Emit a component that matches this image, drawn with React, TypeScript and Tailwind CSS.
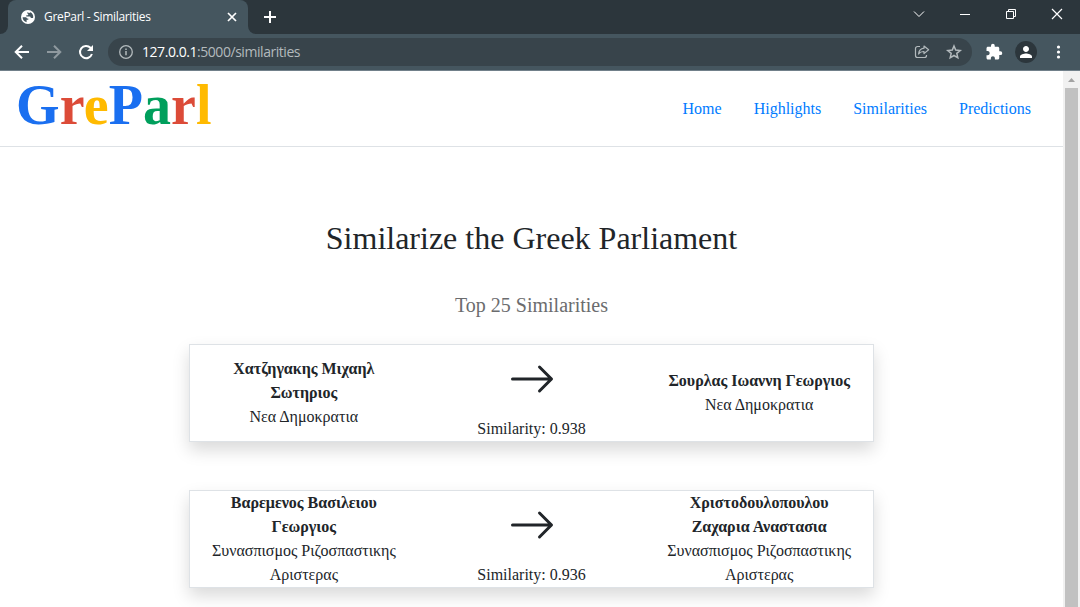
import type { ReactNode } from "react";
import { BsArrowRight } from "react-icons/bs";
import { MdExtension, MdPerson } from "react-icons/md";

type Member = { name: string[]; party: string[] };
type Pair = { from: Member; to: Member; score: string };

const pairs: Pair[] = [
  {
    from: { name: ["Χατζηγακης Μιχαηλ", "Σωτηριος"], party: ["Νεα Δημοκρατια"] },
    to: { name: ["Σουρλας Ιωαννη Γεωργιος"], party: ["Νεα Δημοκρατια"] },
    score: "0.938",
  },
  {
    from: { name: ["Βαρεμενος Βασιλειου", "Γεωργιος"], party: ["Συνασπισμος Ριζοσπαστικης", "Αριστερας"] },
    to: { name: ["Χριστοδουλοπουλου", "Ζαχαρια Αναστασια"], party: ["Συνασπισμος Ριζοσπαστικης", "Αριστερας"] },
    score: "0.936",
  },
];

const logo = [
  ["G", "text-[#1a6ff0]"],
  ["r", "text-[#dc4b38]"],
  ["e", "text-[#ffba00]"],
  ["P", "text-[#1a6ff0]"],
  ["a", "text-[#009f5c]"],
  ["r", "text-[#dc4b38]"],
  ["l", "text-[#ffba00]"],
];

function TabStrip() {
  return (
    <div className="flex h-[34px] shrink-0 items-stretch bg-[#2c363c] text-white">
      <div className="flex w-2 items-end bg-[#45565f]">
        <div className="h-full w-full rounded-br-lg bg-[#2c363c]" />
      </div>
      <div className="flex w-[240px] items-center rounded-t-lg bg-[#45565f] pl-[13px] pr-[10px]">
        <svg className="size-[14px]" viewBox="0 0 14 14" fill="none">
          <circle cx="7" cy="7" r="7" fill="currentColor" />
          <path
            d="M1.6 7.2h2.6c1 0 1.6.5 1.8 1.3h1.3v1.3H5.6v2.4C3.200 11.700 1.600 9.700 1.600 7.200zM6.300 2.200c-.2 1 .2 1.500 1 1.700l-.3 1.300H5.300v1.200h3.200c.9 0 1.300.6 1.300 1.500h2.300c.6-2.600-.7-4.800-3-5.600-.3.8-1 .9-1.400.4z"
            fill="#45565f"
          />
        </svg>
        <span className="ml-[9px] flex-1 whitespace-nowrap text-[12px] tracking-[-0.31px]">GreParl - Similarities</span>
        <svg className="size-3" viewBox="0 0 12 12" stroke="currentColor" strokeWidth="1.7">
          <path d="M2 2l8 8M10 2l-8 8" />
        </svg>
      </div>
      <div className="flex w-2 items-end bg-[#45565f]">
        <div className="h-full w-full rounded-bl-lg bg-[#2c363c]" />
      </div>
      <svg className="ml-[7px] mt-[10px] size-[14px]" viewBox="0 0 14 14" stroke="currentColor" strokeWidth="2">
        <path d="M7 1v12M1 7h12" />
      </svg>
      <div className="ml-auto flex h-7 items-center gap-[34px] pr-[17px]">
        <svg className="size-3" viewBox="0 0 12 12" fill="none" stroke="currentColor">
          <path d="M1 3.500l5 5 5-5" />
        </svg>
        <svg className="size-3" viewBox="0 0 12 12" fill="none" stroke="currentColor">
          <path d="M1 6.500h10" />
        </svg>
        <svg className="size-3" viewBox="0 0 12 12" fill="none" stroke="currentColor">
          <path d="M1.500 3.500h7v7h-7zM3.500 3.500v-2h7v7h-2" />
        </svg>
        <svg className="size-3" viewBox="0 0 12 12" fill="none" stroke="currentColor" strokeWidth="1.2">
          <path d="M1 1l10 10M11 1l-10 10" />
        </svg>
      </div>
    </div>
  );
}

function Toolbar() {
  return (
    <div className="flex h-[37px] shrink-0 items-center border-b border-[#71808a] bg-[#45565f] pl-3 text-white">
      <svg className="size-5" viewBox="0 0 20 20" fill="none" stroke="currentColor" strokeWidth="2">
        <path d="M17 10H4.500M10 3.700L3.700 10l6.300 6.300" />
      </svg>
      <svg className="ml-3 size-5 text-[#8f999f]" viewBox="0 0 20 20" fill="none" stroke="currentColor" strokeWidth="2">
        <path d="M3 10h12.500M10 3.700l6.300 6.300-6.300 6.300" />
      </svg>
      <svg className="ml-3 size-5" viewBox="0 0 20 20" fill="none" stroke="currentColor" strokeWidth="2">
        <path d="M15.900 12a6.100 6.100 0 1 1-1.400-6.200l1.200 1.200" />
        <path d="M17 3v6h-6z" fill="currentColor" stroke="none" />
      </svg>
      <div className="ml-3 flex h-7 w-[864px] items-center rounded-full bg-[#38444b] pl-[11px] pr-[9px] text-[#b3babd]">
        <svg className="size-[14px]" viewBox="0 0 14 14" fill="none" stroke="currentColor" strokeWidth="1.3">
          <circle cx="7" cy="7" r="6.3" />
          <path d="M7 6v4.300M7 3.400v1.500" strokeWidth="1.5" />
        </svg>
        <span className="ml-[9px] flex-1 whitespace-nowrap text-[14px] leading-5 tracking-[-0.45px]">
          <span className="text-white">127.0.0.1</span>:5000/similarities
        </span>
        <svg className="size-4" viewBox="0 0 16 16" fill="none" stroke="currentColor" strokeWidth="1.2">
          <path d="M6 2.500H3.500a2 2 0 0 0-2 2v7a2 2 0 0 0 2 2h7a2 2 0 0 0 2-2V11" />
          <path d="M10 2l4.600 3.800L10 9.600V7.500C7.400 7.400 5.800 8.200 4.600 10c.3-3.400 2-5.400 5.400-5.800z" strokeLinejoin="round" />
        </svg>
        <svg className="ml-[15px] size-[18px]" viewBox="0 0 18 18" fill="none" stroke="currentColor" strokeWidth="1.5">
          <path d="M9 3l1.700 4.100 4.500.4-3.400 2.900 1 4.400L9 12.500l-3.800 2.300 1-4.400-3.400-2.900 4.500-.4z" />
        </svg>
      </div>
      <MdExtension className="ml-[13px] size-[18px]" />
      <div className="ml-3 flex size-[22px] items-center justify-center rounded-full bg-[#2c363c]">
        <MdPerson className="size-[18px]" />
      </div>
      <svg className="ml-[13px] h-4 w-[18px]" viewBox="0 0 18 16" fill="currentColor">
        <circle cx="8.5" cy="3" r="1.6" />
        <circle cx="8.5" cy="8" r="1.6" />
        <circle cx="8.5" cy="13" r="1.6" />
      </svg>
    </div>
  );
}

function Cell({ children }: { children: ReactNode }) {
  return <div className="flex flex-1 basis-0 flex-col items-center justify-center whitespace-nowrap">{children}</div>;
}

function MemberCell({ member }: { member: Member }) {
  return (
    <Cell>
      {member.name.map((line) => (
        <strong key={line} className="font-bold">{line}</strong>
      ))}
      {member.party.map((line) => (
        <span key={line}>{line}</span>
      ))}
    </Cell>
  );
}

function PairCard({ pair }: { pair: Pair }) {
  return (
    <div className="flex h-[98px] border border-[#dee2e6] bg-white text-base leading-6 shadow-[0_8px_16px_rgba(0,0,0,0.15)]">
      <MemberCell member={pair.from} />
      <Cell>
        <BsArrowRight className="mb-[14px] mt-[10px] size-12 shrink-0" />
        <span>Similarity: {pair.score}</span>
      </Cell>
      <MemberCell member={pair.to} />
    </div>
  );
}

export default function App() {
  return (
    <div className="flex h-[607px] w-[1080px] flex-col overflow-hidden bg-white">
      <header className="shrink-0 font-['Open_Sans',sans-serif]">
        <TabStrip />
        <Toolbar />
      </header>
      <div className="flex min-h-0 flex-1 font-['Liberation_Serif',serif]">
        <main className="flex-1 overflow-hidden text-[#212529]">
          <div className="flex h-[76px] items-center justify-between border-b border-[#dee2e6] pl-4 pr-8">
            <div className="-mt-2 text-[56px] font-bold leading-none tracking-[0.12px]">
              {logo.map(([letter, color], i) => (
                <span key={i} className={color}>{letter}</span>
              ))}
            </div>
            <nav className="flex gap-8 text-base leading-6 text-[#007bff]">
              <a>Home</a>
              <a>Highlights</a>
              <a>Similarities</a>
              <a>Predictions</a>
            </nav>
          </div>
          <h1 className="mt-[72px] text-center text-[32px] leading-[38px]">Similarize the Greek Parliament</h1>
          <p className="mt-[33px] text-center text-xl leading-[30px] text-[#6b6c6e]">Top 25 Similarities</p>
          <div className="mx-auto mt-6 flex w-[685px] flex-col gap-12">
            {pairs.map((pair) => (
              <PairCard key={pair.score} pair={pair} />
            ))}
          </div>
        </main>
        <div className="flex w-[17px] flex-col items-center bg-[#f1f1f1]">
          <svg className="h-[17px] w-[17px] shrink-0" viewBox="0 0 17 17" fill="#a3a3a3">
            <path d="M5 11l3.500-4 3.500 4z" />
          </svg>
          <div className="w-[13px] flex-1 bg-[#c1c1c1]" />
        </div>
      </div>
    </div>
  );
}
